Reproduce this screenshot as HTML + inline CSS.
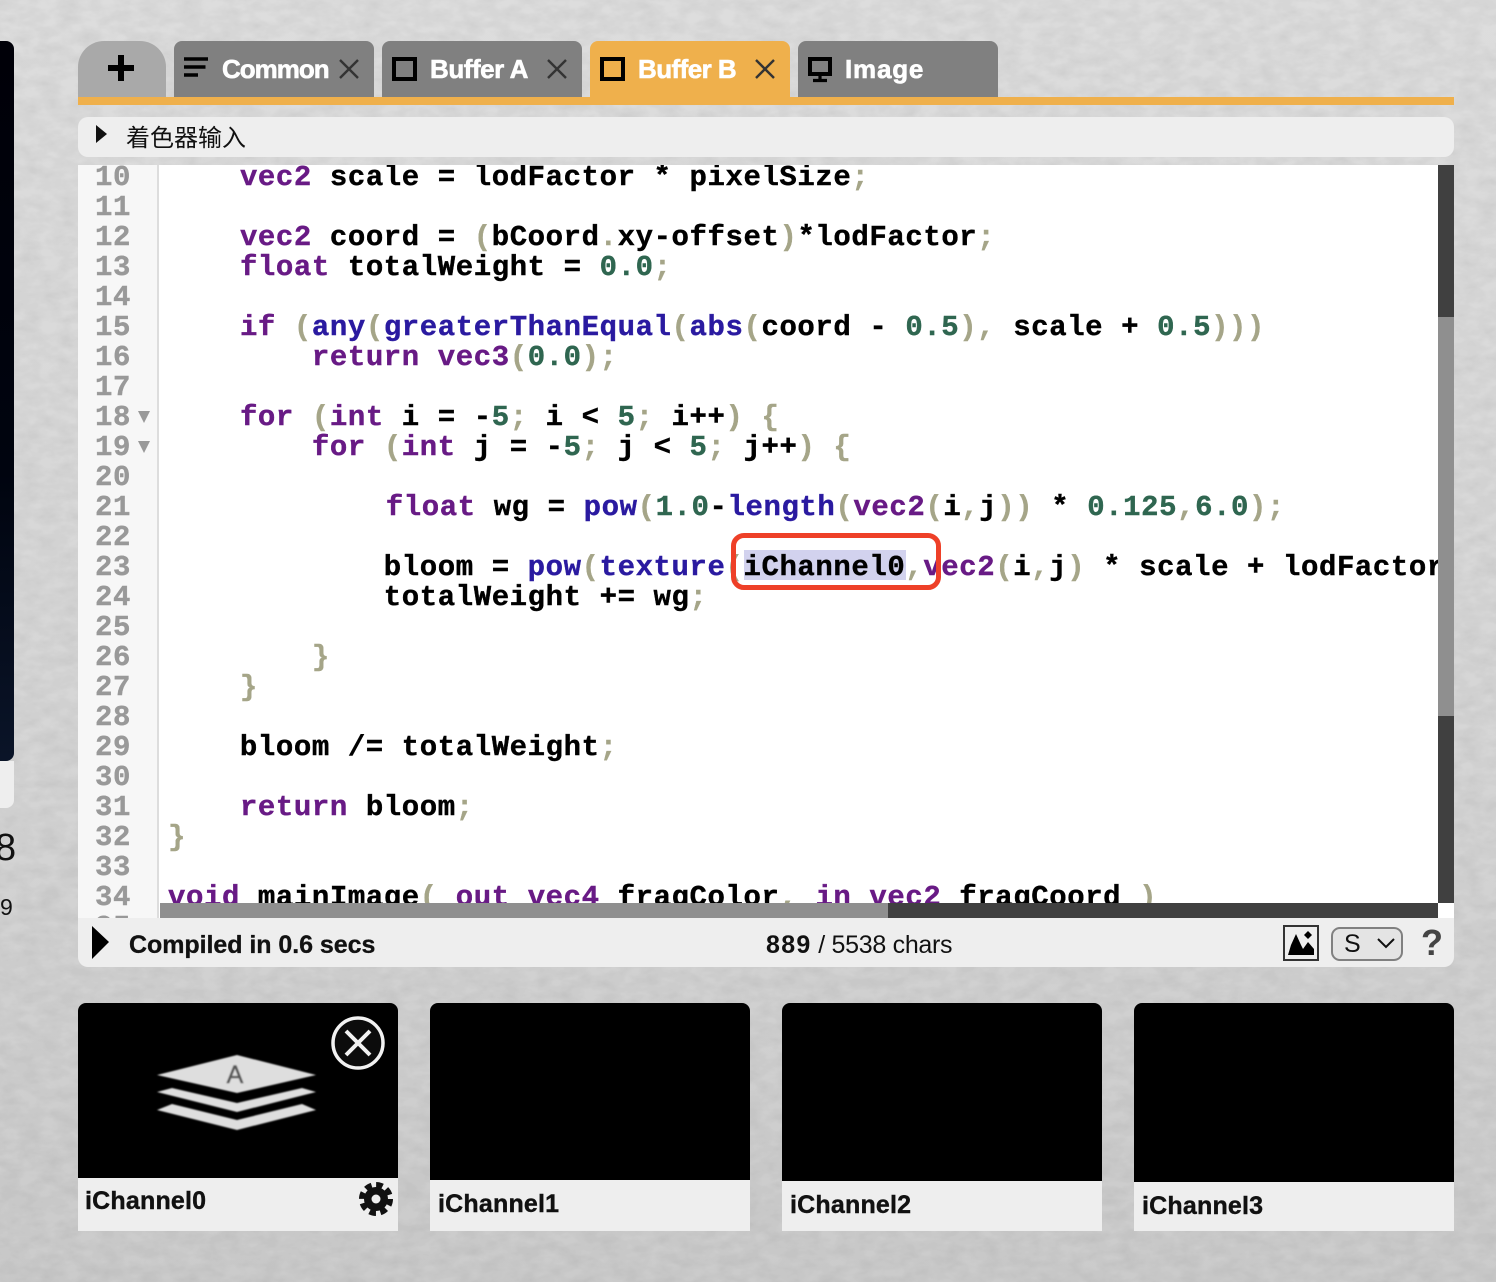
<!DOCTYPE html>
<html><head><meta charset="utf-8"><style>
html,body{margin:0;padding:0;overflow:hidden;height:1282px}
body{width:1496px;height:1282px;position:relative;overflow:hidden;background:#d0d0d0;font-family:"Liberation Sans","Noto Sans CJK SC",sans-serif}
div{position:absolute;box-sizing:border-box}
.tab{top:41px;width:200px;height:56px;background:#808080;border-radius:8px 8px 0 0;color:#fff;font-weight:bold;font-size:26px;line-height:56px}
.tab span{position:absolute;top:0;white-space:nowrap;-webkit-text-stroke:.6px #fff}
.tab svg{position:absolute;left:0;top:0}
#code,#gut{font-family:"Liberation Mono",monospace;font-weight:bold;font-size:29px;letter-spacing:.58px;-webkit-text-stroke:.4px currentColor}
.l{left:0;height:30px;line-height:30px;white-space:pre;color:#000;margin-top:2px}
#gut .l{left:17px;color:#999}
.k{color:#681a85}.f{color:#2a1aa0}.n{color:#2f6650}.p{color:#a5a588}
.lab{left:0;width:320px;background:#eee;font-weight:bold;font-size:25px;color:#111;-webkit-text-stroke:.4px #111}
.lab span{position:absolute;left:8px;white-space:nowrap;letter-spacing:.2px}
.ch{top:1003px;width:320px;height:228px;background:#000;border-radius:8px 8px 0 0;overflow:hidden}
</style></head><body>
<svg width="1496" height="1282" style="position:absolute;left:0;top:0;display:block">
<filter id="t" filterUnits="userSpaceOnUse" x="0" y="0" width="1496" height="1282"><feTurbulence type="fractalNoise" baseFrequency="0.05 0.09" numOctaves="3" seed="4"/><feColorMatrix values="0 0 0 0 0  0 0 0 0 0  0 0 0 0 0  .55 0 0 0 -.14"/></filter>
<linearGradient id="g" x1="0" y1="0" x2="0" y2="1"><stop offset="0" stop-color="#dddddd"/><stop offset=".55" stop-color="#d6d6d6"/><stop offset="1" stop-color="#cbcbcb"/></linearGradient>
<rect width="1496" height="1282" fill="url(#g)"/>
<rect width="1496" height="1282" filter="url(#t)" opacity=".16"/>
</svg>

<div style="left:-20px;top:41px;width:34px;height:720px;background:linear-gradient(#000008,#00040f 60%,#0a1428);border-radius:8px"></div>
<div style="left:-20px;top:761px;width:34px;height:47px;background:#eee;border-radius:0 0 8px 8px"></div>
<div style="left:-5px;top:826px;font-size:38px;line-height:44px;color:#111;font-family:'Liberation Sans',sans-serif">8</div>
<div style="left:0;top:894px;font-size:23px;line-height:27px;color:#111">9</div>

<div style="left:78px;top:41px;width:88px;height:56px;background:#a9a9a9;border-radius:26px 26px 0 0">
<svg width="88" height="56" style="position:absolute;left:0;top:0"><path d="M30 27H56M43 14V40" stroke="#000" stroke-width="6" fill="none"/></svg></div>

<div class="tab" style="left:174px"><svg width="200" height="56"><path d="M10 18H34M10 26H31.5M10 34H24" stroke="#000" stroke-width="3.6" fill="none"/><path d="M166 19L184 37M184 19L166 37" stroke="#333" stroke-width="2.4" fill="none"/></svg><span style="left:48px;letter-spacing:-1px">Common</span></div>
<div class="tab" style="left:382px"><svg width="200" height="56"><rect x="12" y="18" width="21" height="20" stroke="#000" stroke-width="4" fill="none"/><path d="M166 19L184 37M184 19L166 37" stroke="#333" stroke-width="2.4" fill="none"/></svg><span style="left:48px;letter-spacing:-.45px">Buffer A</span></div>
<div class="tab" style="left:590px;background:#efb04c"><svg width="200" height="56"><rect x="12" y="18" width="21" height="20" stroke="#000" stroke-width="4" fill="none"/><path d="M166 19L184 37M184 19L166 37" stroke="#333" stroke-width="2.4" fill="none"/></svg><span style="left:48px;letter-spacing:-.55px">Buffer B</span></div>
<div class="tab" style="left:798px"><svg width="200" height="56"><rect x="12" y="18" width="20" height="15" stroke="#000" stroke-width="4" fill="none"/><path d="M22 34V39M15 39.5H29" stroke="#000" stroke-width="3.2" fill="none"/></svg><span style="left:47px;letter-spacing:.8px">Image</span></div>
<div style="left:78px;top:97px;width:1376px;height:8px;background:#efb04c"></div>

<div style="left:78px;top:117px;width:1376px;height:40px;background:#eee;border-radius:10px">
<svg width="30" height="40" style="position:absolute;left:0;top:0"><path d="M18 8L29 17L18 26Z" fill="#111"/></svg>
<div style="left:48px;top:3px;font-size:24px;line-height:32px;color:#111;white-space:nowrap;font-family:'Noto Sans CJK SC',sans-serif">着色器输入</div></div>

<div style="left:78px;top:165px;width:1376px;height:753px;background:#fff;overflow:hidden">
<div id="gut" style="left:0;top:0;width:81px;height:753px;background:#f7f7f7;border-right:2px solid #ddd;overflow:hidden">
<div class="l" style="top:-4px">10</div><div class="l" style="top:26px">11</div><div class="l" style="top:56px">12</div><div class="l" style="top:86px">13</div><div class="l" style="top:116px">14</div><div class="l" style="top:146px">15</div><div class="l" style="top:176px">16</div><div class="l" style="top:206px">17</div><div class="l" style="top:236px">18</div><div class="l" style="top:266px">19</div><div class="l" style="top:296px">20</div><div class="l" style="top:326px">21</div><div class="l" style="top:356px">22</div><div class="l" style="top:386px">23</div><div class="l" style="top:416px">24</div><div class="l" style="top:446px">25</div><div class="l" style="top:476px">26</div><div class="l" style="top:506px">27</div><div class="l" style="top:536px">28</div><div class="l" style="top:566px">29</div><div class="l" style="top:596px">30</div><div class="l" style="top:626px">31</div><div class="l" style="top:656px">32</div><div class="l" style="top:686px">33</div><div class="l" style="top:716px">34</div><div class="l" style="top:746px">35</div>
<svg width="14" height="50" style="position:absolute;left:60px;top:245px"><path d="M0 1H12L6 13Z" fill="#999"/><path d="M0 31H12L6 43Z" fill="#999"/></svg>
</div>
<div id="code" style="left:90px;top:0;width:1270px;height:738px;overflow:hidden">
<div style="left:576px;top:385px;width:162px;height:30px;background:#d2d2ee"></div>
<div class="l" style="top:-4px">    <span class="k">vec2</span> scale = lodFactor * pixelSize<span class="p">;</span></div>
<div class="l" style="top:56px">    <span class="k">vec2</span> coord = <span class="p">(</span>bCoord<span class="p">.</span>xy-offset<span class="p">)</span>*lodFactor<span class="p">;</span></div>
<div class="l" style="top:86px">    <span class="k">float</span> totalWeight = <span class="n">0.0</span><span class="p">;</span></div>
<div class="l" style="top:146px">    <span class="k">if</span> <span class="p">(</span><span class="f">any</span><span class="p">(</span><span class="f">greaterThanEqual</span><span class="p">(</span><span class="f">abs</span><span class="p">(</span>coord - <span class="n">0.5</span><span class="p">),</span> scale + <span class="n">0.5</span><span class="p">)))</span></div>
<div class="l" style="top:176px">        <span class="k">return</span> <span class="k">vec3</span><span class="p">(</span><span class="n">0.0</span><span class="p">);</span></div>
<div class="l" style="top:236px">    <span class="k">for</span> <span class="p">(</span><span class="k">int</span> i = -<span class="n">5</span><span class="p">;</span> i &lt; <span class="n">5</span><span class="p">;</span> i++<span class="p">) {</span></div>
<div class="l" style="top:266px">        <span class="k">for</span> <span class="p">(</span><span class="k">int</span> j = -<span class="n">5</span><span class="p">;</span> j &lt; <span class="n">5</span><span class="p">;</span> j++<span class="p">) {</span></div>
<div class="l" style="top:326px;left:2px">            <span class="k">float</span> wg = <span class="f">pow</span><span class="p">(</span><span class="n">1.0</span>-<span class="f">length</span><span class="p">(</span><span class="k">vec2</span><span class="p">(</span>i<span class="p">,</span>j<span class="p">))</span> * <span class="n">0.125</span><span class="p">,</span><span class="n">6.0</span><span class="p">);</span></div>
<div class="l" style="top:386px">            bloom = <span class="f">pow</span><span class="p">(</span><span class="f">texture</span><span class="p">(</span>iChannel0<span class="p">,</span><span class="k">vec2</span><span class="p">(</span>i<span class="p">,</span>j<span class="p">)</span> * scale + lodFactor</div>
<div class="l" style="top:416px">            totalWeight += wg<span class="p">;</span></div>
<div class="l" style="top:476px"><span class="p">        }</span></div>
<div class="l" style="top:506px"><span class="p">    }</span></div>
<div class="l" style="top:566px">    bloom /= totalWeight<span class="p">;</span></div>
<div class="l" style="top:626px">    <span class="k">return</span> bloom<span class="p">;</span></div>
<div class="l" style="top:656px"><span class="p">}</span></div>
<div class="l" style="top:716px"><span class="k">void</span> mainImage<span class="p">(</span> <span class="k">out</span> <span class="k">vec4</span> fragColor<span class="p">,</span> <span class="k">in</span> <span class="k">vec2</span> fragCoord <span class="p">)</span></div>
</div>
<div style="left:1360px;top:0;width:16px;height:738px;background:#404040"></div>
<div style="left:1360px;top:152px;width:16px;height:399px;background:#8f8f8f"></div>
<div style="left:82px;top:738px;width:1278px;height:15px;background:#404040"></div>
<div style="left:82px;top:738px;width:728px;height:15px;background:#8f8f8f"></div>
</div>

<div style="left:731px;top:533px;width:210px;height:57px;border:5px solid #ee4028;border-radius:13px"></div>

<div style="left:78px;top:918px;width:1376px;height:49px;background:#eee;border-radius:0 0 10px 10px">
<svg width="40" height="49" style="position:absolute;left:0;top:0"><path d="M14 8L31 24L14 41Z" fill="#000"/></svg>
<div style="left:51px;top:11px;font-weight:bold;font-size:25px;line-height:32px;color:#111;white-space:nowrap;-webkit-text-stroke:.3px #111;letter-spacing:-.05px">Compiled in 0.6 secs</div>
<div style="left:688px;top:11px;font-size:25px;line-height:32px;color:#111;white-space:nowrap;letter-spacing:-.3px"><b style="letter-spacing:1.3px">889</b> / 5538 chars</div>
<svg width="36" height="37" style="position:absolute;left:1205px;top:7px"><rect x="1" y="1" width="34" height="34" fill="none" stroke="#333" stroke-width="2"/><path d="M5 30L8 20L13 9L18 20L20 24L25 17L31 24V30Z" fill="#000"/><path d="M25 6L29 10L25 14L21 10Z" fill="#000"/></svg>
<div style="left:1253px;top:9px;width:72px;height:34px;background:#e4e4e4;border:2px solid #808080;border-radius:9px"></div>
<div style="left:1266px;top:10px;font-size:25px;line-height:32px;color:#111">S</div>
<svg width="20" height="14" style="position:absolute;left:1298px;top:19px"><path d="M2 2L10 10L18 2" fill="none" stroke="#111" stroke-width="2"/></svg>
<div style="left:1343px;top:6px;font-size:36px;line-height:38px;font-weight:bold;color:#444">?</div>
</div>

<div class="ch" style="left:78px">
<svg width="320" height="175" style="position:absolute;left:0;top:0">
<filter id="b"><feGaussianBlur stdDeviation=".7"/></filter>
<g filter="url(#b)">
<path d="M79 72L159 52L238 72L159 90Z" fill="#dedede"/>
<path d="M79 89L94 85L159 100L224 85L238 89L159 109Z" fill="#dedede"/>
<path d="M79 107L94 101L159 117L224 101L238 107L159 127Z" fill="#dedede"/>
<text x="157" y="80" text-anchor="middle" font-size="25" fill="#555" stroke="#555" stroke-width=".5" font-family="Liberation Sans">A</text>
</g>
<circle cx="280" cy="40" r="25" fill="#0c0c0c" stroke="#f2f2f2" stroke-width="3.5"/>
<path d="M268 28L292 52M292 28L268 52" stroke="#f2f2f2" stroke-width="4"/>
</svg>
<div class="lab" style="top:175px;height:53px"><span style="top:9px;left:7px">iChannel0</span>
<svg width="36" height="36" style="position:absolute;left:280px;top:3px"><circle cx="18" cy="18" r="12" fill="#111"/><circle cx="18" cy="18" r="14" fill="none" stroke="#111" stroke-width="6" stroke-dasharray="6.5 4.5"/><circle cx="18" cy="18" r="4.5" fill="#eee"/></svg></div>
</div>
<div class="ch" style="left:430px"><div class="lab" style="top:177px;height:51px"><span style="top:10px">iChannel1</span></div></div>
<div class="ch" style="left:782px"><div class="lab" style="top:178px;height:50px"><span style="top:10px">iChannel2</span></div></div>
<div class="ch" style="left:1134px"><div class="lab" style="top:179px;height:49px"><span style="top:10px">iChannel3</span></div></div>
</body></html>
